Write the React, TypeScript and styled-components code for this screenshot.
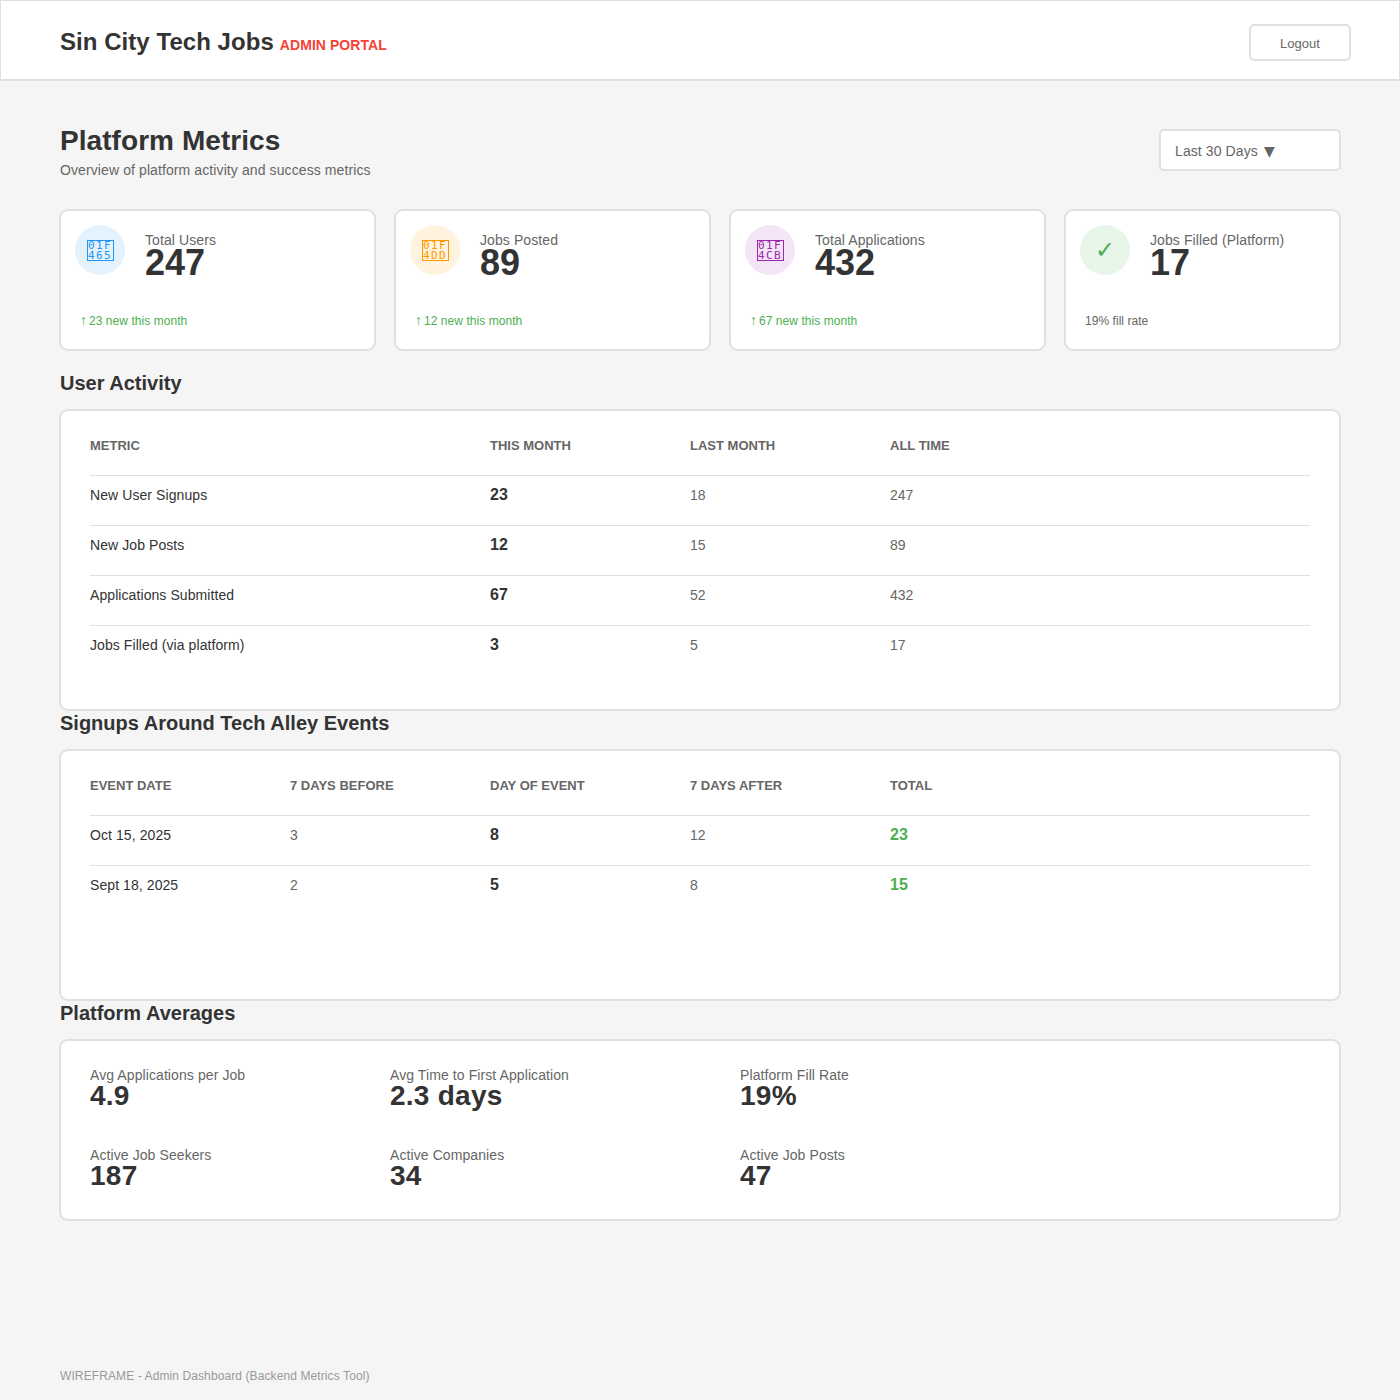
import React from 'react';
import styled, { createGlobalStyle } from 'styled-components';

const INK = '#333333';
const MUTED = '#666666';
const LINE = '#e0e0e0';
const GREEN = '#4caf50';

const GlobalStyle = createGlobalStyle`
  * {
    box-sizing: border-box;
  }
  html, body {
    margin: 0;
    padding: 0;
    background: #f5f5f5;
    font-family: Arial, "Liberation Sans", sans-serif;
  }
`;

const Page = styled.div`
  display: flex;
  flex-direction: column;
  min-height: 1400px;
`;

const Header = styled.header`
  display: flex;
  align-items: center;
  justify-content: space-between;
  height: 80px;
  padding: 4px 49px 0 59px;
  background: white;
  border: 1px solid ${LINE};
  box-shadow: 0 1px 0 ${LINE};
`;

const Brand = styled.div`
  display: flex;
  align-items: baseline;
  gap: 6px;
  color: ${INK};
  font-size: 24px;
  font-weight: bold;
  letter-spacing: 0.05px;
`;

const Portal = styled.span`
  color: #f44336;
  font-size: 14px;
`;

const LogoutButton = styled.button`
  width: 100px;
  height: 35px;
  margin-top: 1px;
  padding: 2px 0 0;
  background: white;
  border: 1px solid ${LINE};
  border-radius: 4px;
  box-shadow: 0 0 0 1px ${LINE};
  color: ${MUTED};
  font-family: inherit;
  font-size: 13px;
`;

const Main = styled.main`
  display: flex;
  flex-direction: column;
  padding: 44px 60px 0;
`;

const TitleRow = styled.div`
  display: flex;
  justify-content: space-between;
  align-items: flex-start;
  height: 86px;
`;

const Title = styled.h1`
  margin: 0;
  color: ${INK};
  font-size: 28px;
  line-height: 34px;
  letter-spacing: 0.06px;
`;

const Subtitle = styled.p`
  margin: 4px 0 0;
  color: ${MUTED};
  font-size: 14px;
  line-height: 16px;
  letter-spacing: 0.1px;
`;

const RangeSelect = styled.div`
  width: 180px;
  height: 40px;
  margin-top: 6px;
  padding: 0 14px;
  background: white;
  border: 1px solid ${LINE};
  border-radius: 4px;
  box-shadow: 0 0 0 1px ${LINE};
  color: ${MUTED};
  font-size: 14px;
  line-height: 40px;
  letter-spacing: 0.1px;
`;

const Caret = styled.span`
  margin-left: 2px;
  font-family: "DejaVu Sans", sans-serif;
`;

const StatGrid = styled.div`
  display: grid;
  grid-template-columns: 315px 315px 315px 1fr;
  gap: 20px;
  margin-bottom: 20px;
`;

const StatCard = styled.div`
  display: flex;
  flex-direction: column;
  height: 140px;
  padding: 14px 14px 0;
  background: white;
  border: 1px solid ${LINE};
  border-radius: 8px;
  box-shadow: 0 0 0 1px ${LINE};
`;

const StatTop = styled.div`
  display: flex;
  gap: 20px;
`;

const IconCircle = styled.div<{ $bg: string; $fg: string }>`
  display: flex;
  align-items: center;
  justify-content: center;
  width: 50px;
  height: 50px;
  border-radius: 50%;
  background: ${({ $bg }) => $bg};
  color: ${({ $fg }) => $fg};
  font-size: 24px;
`;

/* the reference shows the missing-glyph box of each emoji, with its code point in it */
const MissingGlyph = styled.div`
  width: 27px;
  height: 21px;
  border: 1px solid currentColor;
  font-family: "DejaVu Sans Mono", "Liberation Mono", monospace;
  font-size: 11px;
  line-height: 10px;
  letter-spacing: 1.4px;
  text-align: center;
  white-space: pre-line;
`;

const StatText = styled.div`
  padding-top: 8px;
`;

const Label = styled.div`
  color: ${MUTED};
  font-size: 14px;
  line-height: 14px;
  letter-spacing: 0.09px;
`;

const BigValue = styled.div`
  color: ${INK};
  font-size: 36px;
  font-weight: bold;
  line-height: 32px;
`;

const Trend = styled.div<{ $up?: boolean }>`
  margin-top: 35px;
  padding-left: 5px;
  color: ${({ $up }) => ($up ? GREEN : MUTED)};
  font-size: 12px;
  line-height: 14px;
  letter-spacing: 0.05px;
`;

const TrendArrow = styled.span`
  margin-right: -2px;
  font-size: 14px;
  line-height: 12px;
`;

const SectionTitle = styled.h2`
  margin: 0 0 14px;
  color: ${INK};
  font-size: 20px;
  line-height: 26px;
`;

const Panel = styled.section<{ $height: number }>`
  height: ${({ $height }) => $height}px;
  padding: 4px 29px 0;
  background: white;
  border: 1px solid ${LINE};
  border-radius: 8px;
  box-shadow: 0 0 0 1px ${LINE};
`;

const HeadRow = styled.div<{ $columns: string }>`
  display: grid;
  grid-template-columns: ${({ $columns }) => $columns};
  align-items: center;
  height: 60px;
`;

const Row = styled(HeadRow)`
  height: 50px;
  padding-bottom: 12px;
  border-top: 1px solid ${LINE};
`;

const HeadCell = styled.div`
  color: ${MUTED};
  font-size: 13px;
  font-weight: bold;
`;

const Cell = styled.div<{ $tone?: 'name' | 'strong' | 'good' }>`
  color: ${({ $tone }) =>
    $tone === 'name' || $tone === 'strong' ? INK : $tone === 'good' ? GREEN : MUTED};
  font-size: ${({ $tone }) => ($tone === 'strong' || $tone === 'good' ? 16 : 14)}px;
  font-weight: ${({ $tone }) => ($tone === 'strong' || $tone === 'good' ? 'bold' : 'normal')};
  letter-spacing: ${({ $tone }) => ($tone === 'name' ? 0.08 : 0)}px;
`;

const AverageGrid = styled.div`
  display: grid;
  grid-template-columns: 300px 350px 1fr;
  grid-auto-rows: 80px;
  padding-top: 23px;
`;

const AverageValue = styled(BigValue)`
  font-size: 28px;
  line-height: 28px;
  letter-spacing: 0.25px;
`;

const Footer = styled.footer`
  margin-top: auto;
  padding: 0 60px 17px;
  color: #999999;
  font-size: 12px;
  line-height: 14px;
  letter-spacing: 0.1px;
`;

const stats = [
  { code: '01F\n465', bg: '#e3f2fd', fg: '#2196f3', label: 'Total Users', value: '247', note: '23 new this month', up: true },
  { code: '01F\n4DD', bg: '#fff3e0', fg: '#ff9800', label: 'Jobs Posted', value: '89', note: '12 new this month', up: true },
  { code: '01F\n4CB', bg: '#f3e5f5', fg: '#9c27b0', label: 'Total Applications', value: '432', note: '67 new this month', up: true },
  { code: '', bg: '#e8f5e9', fg: GREEN, label: 'Jobs Filled (Platform)', value: '17', note: '19% fill rate', up: false },
];

const activity = [
  ['New User Signups', '23', '18', '247'],
  ['New Job Posts', '12', '15', '89'],
  ['Applications Submitted', '67', '52', '432'],
  ['Jobs Filled (via platform)', '3', '5', '17'],
];

const events = [
  ['Oct 15, 2025', '3', '8', '12', '23'],
  ['Sept 18, 2025', '2', '5', '8', '15'],
];

const averages = [
  ['Avg Applications per Job', '4.9'],
  ['Avg Time to First Application', '2.3 days'],
  ['Platform Fill Rate', '19%'],
  ['Active Job Seekers', '187'],
  ['Active Companies', '34'],
  ['Active Job Posts', '47'],
];

const ACTIVITY_COLUMNS = '400px 200px 200px 1fr';
const EVENT_COLUMNS = '200px 200px 200px 200px 1fr';

const App = () => (
  <Page>
    <GlobalStyle />
    <Header>
      <Brand>
        Sin City Tech Jobs
        <Portal>ADMIN PORTAL</Portal>
      </Brand>
      <LogoutButton>Logout</LogoutButton>
    </Header>
    <Main>
      <TitleRow>
        <div>
          <Title>Platform Metrics</Title>
          <Subtitle>Overview of platform activity and success metrics</Subtitle>
        </div>
        <RangeSelect>Last 30 Days <Caret>▼</Caret></RangeSelect>
      </TitleRow>

      <StatGrid>
        {stats.map((s) => (
          <StatCard key={s.label}>
            <StatTop>
              <IconCircle $bg={s.bg} $fg={s.fg}>
                {s.code ? <MissingGlyph>{s.code}</MissingGlyph> : '✓'}
              </IconCircle>
              <StatText>
                <Label>{s.label}</Label>
                <BigValue>{s.value}</BigValue>
              </StatText>
            </StatTop>
            <Trend $up={s.up}>
              {s.up && <TrendArrow>↑ </TrendArrow>}
              {s.note}
            </Trend>
          </StatCard>
        ))}
      </StatGrid>

      <SectionTitle>User Activity</SectionTitle>
      <Panel $height={300}>
        <HeadRow $columns={ACTIVITY_COLUMNS}>
          <HeadCell>METRIC</HeadCell>
          <HeadCell>THIS MONTH</HeadCell>
          <HeadCell>LAST MONTH</HeadCell>
          <HeadCell>ALL TIME</HeadCell>
        </HeadRow>
        {activity.map(([name, current, last, total]) => (
          <Row $columns={ACTIVITY_COLUMNS} key={name}>
            <Cell $tone="name">{name}</Cell>
            <Cell $tone="strong">{current}</Cell>
            <Cell>{last}</Cell>
            <Cell>{total}</Cell>
          </Row>
        ))}
      </Panel>

      <SectionTitle>Signups Around Tech Alley Events</SectionTitle>
      <Panel $height={250}>
        <HeadRow $columns={EVENT_COLUMNS}>
          <HeadCell>EVENT DATE</HeadCell>
          <HeadCell>7 DAYS BEFORE</HeadCell>
          <HeadCell>DAY OF EVENT</HeadCell>
          <HeadCell>7 DAYS AFTER</HeadCell>
          <HeadCell>TOTAL</HeadCell>
        </HeadRow>
        {events.map(([date, before, day, after, total]) => (
          <Row $columns={EVENT_COLUMNS} key={date}>
            <Cell $tone="name">{date}</Cell>
            <Cell>{before}</Cell>
            <Cell $tone="strong">{day}</Cell>
            <Cell>{after}</Cell>
            <Cell $tone="good">{total}</Cell>
          </Row>
        ))}
      </Panel>

      <SectionTitle>Platform Averages</SectionTitle>
      <Panel $height={180}>
        <AverageGrid>
          {averages.map(([label, value]) => (
            <div key={label}>
              <Label>{label}</Label>
              <AverageValue>{value}</AverageValue>
            </div>
          ))}
        </AverageGrid>
      </Panel>
    </Main>
    <Footer>WIREFRAME - Admin Dashboard (Backend Metrics Tool)</Footer>
  </Page>
);

export default App;
